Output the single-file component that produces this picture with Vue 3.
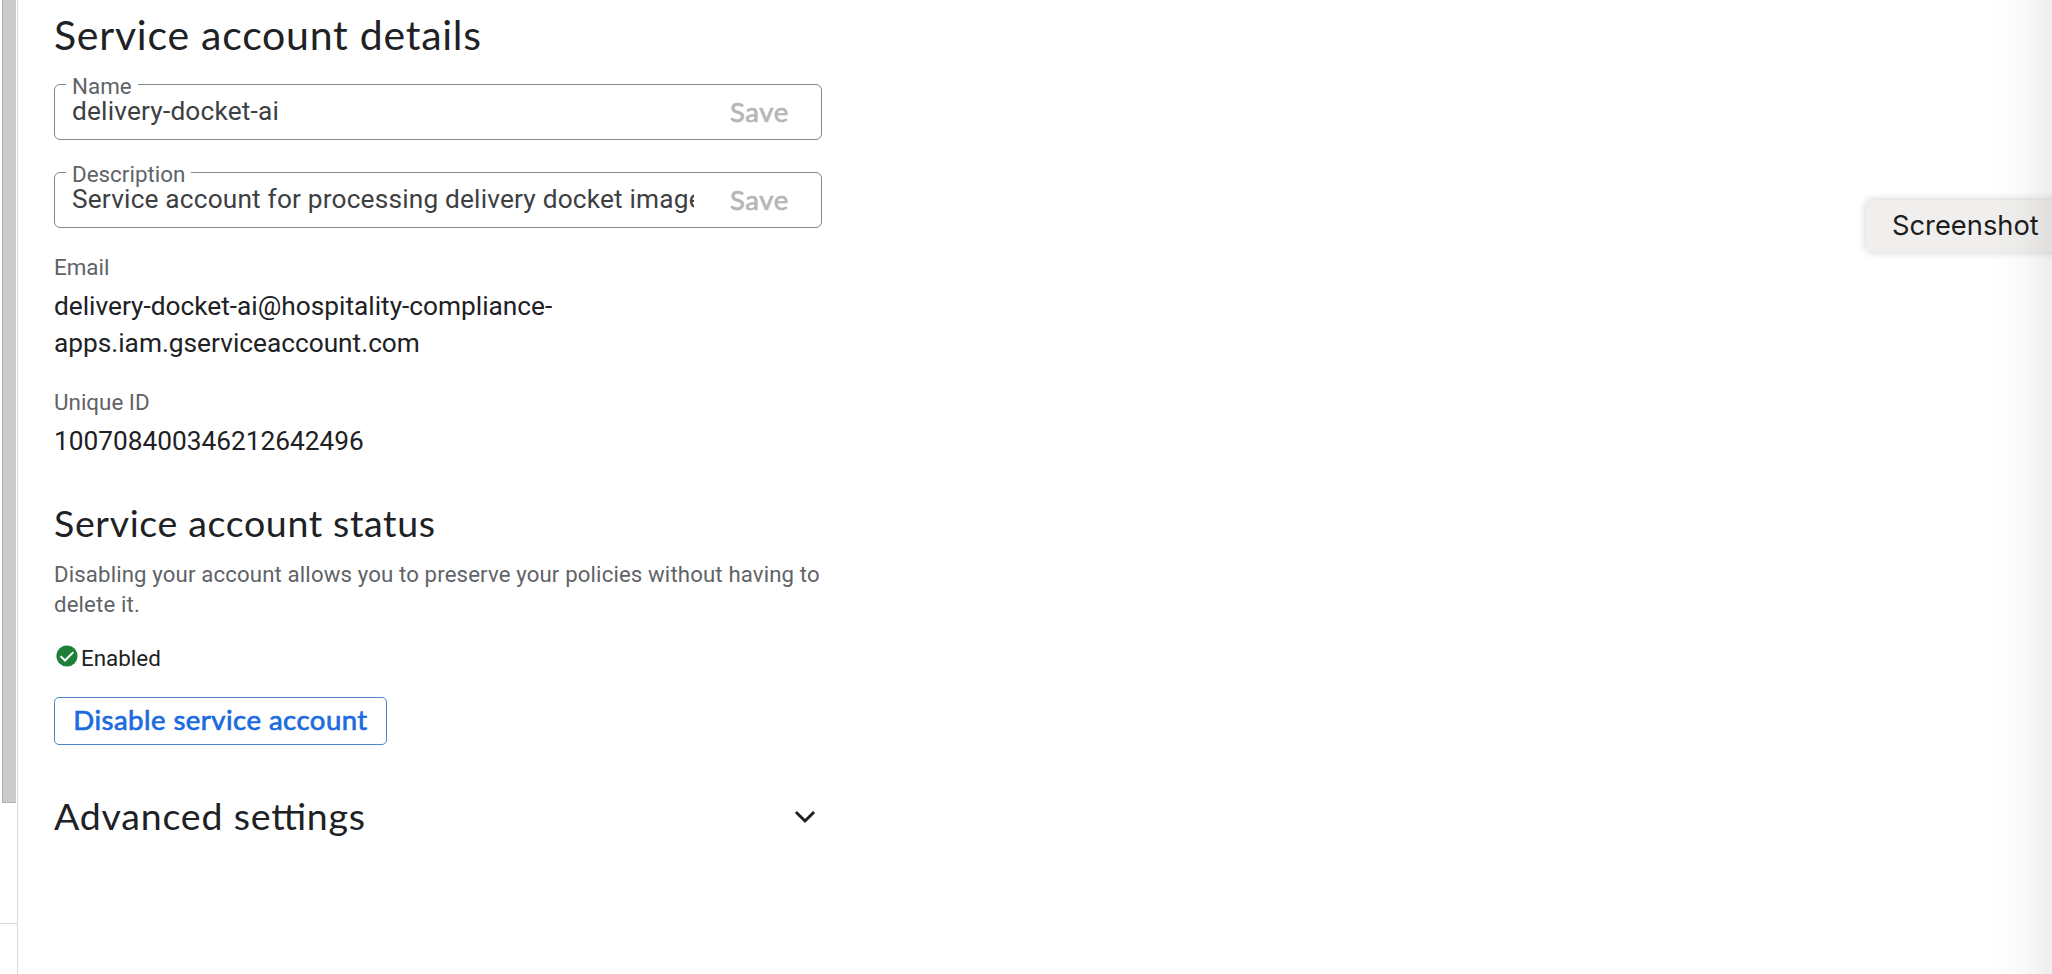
<script setup>
const fields = [
  { label: 'Name', value: 'delivery-docket-ai', key: 'name' },
  { label: 'Description', value: 'Service account for processing delivery docket image', key: 'description' },
]
</script>

<template>
  <div class="page">
    <aside class="rail">
      <div class="thumb"></div>
      <div class="rail-foot"></div>
    </aside>
    <main class="panel">
      <h1>Service account details</h1>
      <div v-for="f in fields" :key="f.key" class="field" :class="f.key">
        <span class="label">{{ f.label }}</span>
        <div class="value">{{ f.value }}</div>
        <button class="save" disabled>Save</button>
      </div>
      <div class="caption email-cap">Email</div>
      <div class="info email">delivery-docket-ai@hospitality-compliance-<br>apps.iam.gserviceaccount.com</div>
      <div class="caption id-cap">Unique ID</div>
      <div class="info">100708400346212642496</div>
      <h2 class="status-title">Service account status</h2>
      <p class="note">Disabling your account allows you to preserve your policies without having to delete it.</p>
      <div class="state">
        <svg class="check" viewBox="0 0 22 22"><circle cx="11" cy="11" r="10.6" fill="#1e8038" /><path d="M4.6 11.2 9 15.5 17.3 7.1" fill="none" stroke="#fff" stroke-width="2" /></svg>
        <span>Enabled</span>
      </div>
      <button class="disable">Disable service account</button>
      <div class="advanced">
        <h2 class="advanced-title">Advanced settings</h2>
        <svg class="chevron" viewBox="0 0 22 14"><path d="M1.9 2 11 11 20.1 2" fill="none" stroke="#202124" stroke-width="3" /></svg>
      </div>
    </main>
    <div class="tooltip"><span>Screenshot</span></div>
    <div class="shade"></div>
  </div>
</template>

<style>
html, body { margin: 0; background: #fff; }
</style>

<style scoped>
.page {
  position: relative;
  display: flex;
  width: 2052px;
  height: 974px;
  overflow: hidden;
  background: #fff;
  color: #202124;
  font-family: Roboto, "Liberation Sans", sans-serif;
}
.rail {
  box-sizing: border-box;
  display: flex;
  flex-direction: column;
  width: 18px;
  border-right: 1px solid #dadada;
}
.thumb {
  box-sizing: border-box;
  width: 14px;
  height: 803px;
  margin-left: 2px;
  background: #cbcbcb;
  border-left: 1px solid #b0b0b0;
  border-bottom: 1px solid #b0b0b0;
}
.rail-foot { height: 50px; margin-top: 120px; border-top: 1px solid #dadada; }
.panel { width: 768px; padding: 11px 0 0 36px; }
h1, h2, p { margin: 0; font-weight: 400; }
h1, h2 { font-family: Lato, sans-serif; white-space: nowrap; font-feature-settings: "liga" 1; }
h1 { font-size: 41px; line-height: 48px; letter-spacing: 0.75px; }
h2 { font-size: 37.5px; line-height: 46px; letter-spacing: 0.65px; }
button { box-sizing: border-box; padding: 0; background: none; border: none; font-family: Lato, sans-serif; }
.field {
  position: relative;
  box-sizing: border-box;
  display: flex;
  height: 56px;
  border: 1px solid #80868b;
  border-radius: 6px;
}
.name { margin-top: 25px; }
.description { margin-top: 32px; }
.label {
  position: absolute;
  left: 11px;
  top: -14px;
  padding: 0 6px;
  background: #fff;
  color: #5f6368;
  font-size: 22.4px;
  line-height: 30px;
}
.value {
  width: 622px;
  margin-left: 17px;
  overflow: hidden;
  color: #3c4043;
  font-size: 26.25px;
  line-height: 52px;
  white-space: nowrap;
  letter-spacing: 0.18px;
  z-index: 1;
}
.save {
  margin-left: 36px;
  color: #b5b6b7;
  font-size: 27.5px;
  -webkit-text-stroke: 0.7px #b5b6b7;
  line-height: 54px;
  letter-spacing: 0.6px;
}
.caption { color: #5f6368; font-size: 22.4px; line-height: 30px; }
.email-cap { margin-top: 24px; }
.id-cap { margin-top: 25px; }
.info { margin-top: 5px; font-size: 26.25px; line-height: 38px; white-space: nowrap; }
.email { margin-top: 6px; line-height: 37px; }
.status-title { margin-top: 40px; }
.note { margin-top: 13px; color: #5f6368; font-size: 22.2px; line-height: 30px; letter-spacing: 0.14px; }
.state { display: flex; align-items: center; margin-top: 24px; font-size: 22.4px; line-height: 30px; }
.check { width: 22px; height: 22px; margin: -4px 3px 0 2px; }
.disable {
  display: block;
  width: 333px;
  height: 48px;
  margin-top: 24px;
  padding-bottom: 3px;
  border: 1px solid #4f83cc;
  border-radius: 5px;
  color: #1a6be0;
  font-size: 27.5px;
  -webkit-text-stroke: 0.7px #1a6be0;
  letter-spacing: 0.48px;
  white-space: nowrap;
}
.advanced { display: flex; align-items: center; justify-content: space-between; margin-top: 48px; }
.advanced-title { letter-spacing: 0.8px; }
.chevron { width: 22px; height: 14px; margin: 2px 6px 0 0; }
.tooltip {
  position: absolute;
  left: 1866px;
  top: 200px;
  box-sizing: border-box;
  width: 200px;
  height: 52px;
  padding-left: 26px;
  border-radius: 6px;
  background: #f0efed;
  box-shadow: 0 0 8px rgba(0, 0, 0, 0.2);
  color: #1d1d1d;
  font-family: Inter, sans-serif;
  font-size: 27.3px;
  line-height: 51px;
}
.shade {
  position: absolute;
  right: 0;
  top: 0;
  width: 60px;
  height: 100%;
  background: linear-gradient(to right, rgba(0, 0, 0, 0), rgba(0, 0, 0, 0.02) 50%, rgba(0, 0, 0, 0.07));
}
</style>
